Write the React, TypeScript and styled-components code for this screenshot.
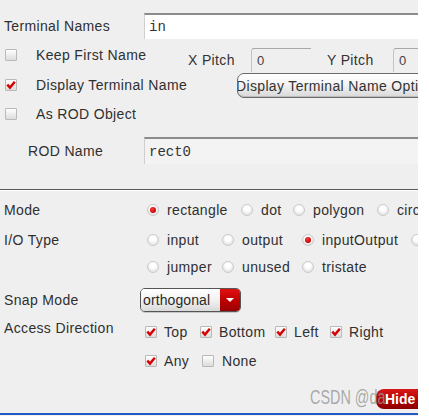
import React from 'react';
import styled, { createGlobalStyle } from 'styled-components';

const Global = createGlobalStyle`
  html, body { margin: 0; padding: 0; background: #ffffff; }
  body { font-family: "Liberation Sans", Arial, sans-serif; }
`;

const Panel = styled.div`
  position: relative;
  width: 418px;
  height: 416px;
  background: #efefef;
  overflow: hidden;
  color: #303030;
  font-size: 14px;
  letter-spacing: 0.35px;
  font-family: "Liberation Sans", Arial, sans-serif;
  display: flex;
  flex-direction: column;
`;

const Row = styled.div<{ $h: number; $mt?: number; $align?: string }>`
  display: flex;
  flex-shrink: 0;
  align-items: ${(p) => p.$align || 'center'};
  height: ${(p) => p.$h}px;
  margin-top: ${(p) => p.$mt || 0}px;
  white-space: nowrap;
`;

const Label = styled.div<{ $w: number; $pl?: number; $h?: number }>`
  flex: none;
  box-sizing: border-box;
  width: ${(p) => p.$w}px;
  padding-left: ${(p) => p.$pl ?? 4}px;
  height: ${(p) => p.$h ?? 24}px;
  display: flex;
  align-items: center;
`;

const TextField = styled.div<{ $bg?: string }>`
  flex: none;
  box-sizing: border-box;
  width: 300px;
  height: 100%;
  background: ${(p) => p.$bg || '#ffffff'};
  border-top: 2px solid #8c8c8c;
  border-left: 1px solid #cfcfcf;
  padding-left: 4px;
  display: flex;
  align-items: center;
  font-family: "Liberation Mono", "Courier New", monospace;
  font-size: 14px;
  letter-spacing: 0;
  color: #333;
`;

const CheckItem = styled.div<{ $w?: number; $mt?: number; $gap: number; $pl?: number }>`
  flex: none;
  box-sizing: border-box;
  ${(p) => (p.$w ? `width: ${p.$w}px;` : '')}
  margin-top: ${(p) => p.$mt || 0}px;
  padding-left: ${(p) => p.$pl || 0}px;
  height: 24px;
  display: flex;
  align-items: center;
  gap: ${(p) => p.$gap}px;
`;

const BoxWrap = styled.span`
  flex: none;
  width: 12px;
  height: 12px;
  box-sizing: border-box;
  border: 1px solid #b9b9b9;
  border-radius: 1px;
  background: linear-gradient(#ffffff, #dcdcdc);
  position: relative;
  display: block;
`;

const Check = styled.svg`
  position: absolute;
  left: 0;
  top: 0;
`;

const CheckBox = ({ on }: { on?: boolean }) => (
  <BoxWrap>
    {on && (
      <Check width="10" height="10" viewBox="0 0 10 10">
        <path d="M1.3 4.6 L4 7.6 L8.8 1.8" fill="none" stroke="#d60000" strokeWidth="2.4" strokeLinejoin="miter" />
      </Check>
    )}
  </BoxWrap>
);

const RadioCircle = styled.span<{ $on?: boolean }>`
  flex: none;
  width: 12px;
  height: 12px;
  border-radius: 50%;
  box-sizing: border-box;
  border: 1px solid #cacaca;
  background: radial-gradient(circle at 50% 35%, #ffffff 30%, #d6d6d6 100%);
  display: flex;
  align-items: center;
  justify-content: center;
  &::after {
    content: '';
    display: ${(p) => (p.$on ? 'block' : 'none')};
    width: 6px;
    height: 6px;
    border-radius: 50%;
    background: radial-gradient(circle at 40% 35%, #ff3a3a, #c80000 70%);
  }
`;

const Option = styled.div`
  display: flex;
  align-items: center;
  gap: 8px;
  height: 24px;
  white-space: nowrap;
`;

const Radio = ({ on, children }: { on?: boolean; children: React.ReactNode }) => (
  <Option>
    <RadioCircle $on={on} />
    <span>{children}</span>
  </Option>
);

const PitchLabel = styled.div<{ $w: number }>`
  flex: none;
  width: ${(p) => p.$w}px;
  height: 24px;
  display: flex;
  align-items: center;
  color: #333;
`;

const PitchField = styled.div`
  flex: none;
  box-sizing: border-box;
  width: 60px;
  height: 24px;
  border-top: 1px solid #a8a8a8;
  border-left: 1px solid #c4c4c4;
  border-top-left-radius: 3px;
  padding-left: 5px;
  display: flex;
  align-items: center;
  color: #444;
  font-size: 13px;
`;

const PitchGroup = styled.div`
  display: flex;
  margin-top: 9px;
`;

const Spacer = styled.div<{ $w: number }>`
  flex: none;
  width: ${(p) => p.$w}px;
`;

const OptButton = styled.div`
  flex: none;
  margin-top: 4px;
  width: 200px;
  height: 25px;
  box-sizing: border-box;
  border: 1px solid #6a6a6a;
  border-radius: 7px;
  background: linear-gradient(#ffffff, #f4f4f4 45%, #d8d8d8);
  box-shadow: inset 0 -1px 0 #bdbdbd;
  display: flex;
  align-items: center;
  justify-content: flex-start;
  text-indent: -2px;
  overflow: hidden;
  white-space: nowrap;
  color: #333;
`;

const Separator = styled.div`
  flex-shrink: 0;
  margin-top: 25px;
  height: 1px;
  background: #5a5a5a;
  border-bottom: 1px solid #ffffff;
`;

const OptGrid = styled.div<{ $cols: string; $mt?: number; $rg?: number }>`
  display: grid;
  grid-template-columns: ${(p) => p.$cols};
  grid-auto-rows: 24px;
  row-gap: ${(p) => p.$rg || 0}px;
  margin-top: ${(p) => p.$mt || 0}px;
`;

const Block = styled.div<{ $mt: number }>`
  display: flex;
  align-items: flex-start;
  flex-shrink: 0;
  margin-top: ${(p) => p.$mt}px;
  white-space: nowrap;
`;

const Dropdown = styled.div`
  flex: none;
  width: 101px;
  height: 24px;
  box-sizing: border-box;
  border: 1px solid #555;
  border-radius: 5px;
  overflow: hidden;
  display: flex;
  box-shadow: 0 1px 0 #c8c8c8;
`;

const DropText = styled.div`
  flex: 1;
  background: linear-gradient(#ffffff, #f2f2f2 50%, #d9d9d9);
  display: flex;
  align-items: center;
  padding-left: 2px;
  letter-spacing: 0.1px;
  color: #2a2a2a;
`;

const DropArrow = styled.div`
  flex: none;
  width: 20px;
  background: linear-gradient(#e01010, #b80000 60%, #9a0000);
  display: flex;
  align-items: center;
  justify-content: center;
  &::after {
    content: '';
    width: 0;
    height: 0;
    border-left: 4px solid transparent;
    border-right: 4px solid transparent;
    border-top: 4px solid #ffffff;
  }
`;

const CheckGrid = styled.div`
  display: grid;
  grid-template-columns: 55px 75px 55px auto;
  grid-auto-rows: 24px;
  row-gap: 5px;
  margin-top: 4px;
`;

const Footer = styled.div`
  margin-top: auto;
  display: flex;
  padding-left: 376px;
  height: 20px;
  flex-shrink: 0;
`;

const HideButton = styled.div`
  flex: none;
  width: 60px;
  height: 20px;
  border-radius: 8px;
  background: linear-gradient(#d81818, #b00000 60%, #8c0000);
  color: #ffffff;
  font-weight: bold;
  font-size: 14px;
  letter-spacing: 0;
  display: flex;
  align-items: center;
  padding-left: 9px;
  box-sizing: border-box;
`;

const BlueLine = styled.div`
  flex-shrink: 0;
  margin-top: 4px;
  margin-bottom: 1px;
  height: 2px;
  background: #2458c4;
`;

const Watermark = styled.div`
  position: absolute;
  left: 310px;
  top: 386px;
  font-family: "Liberation Sans", Arial, sans-serif;
  font-size: 20px;
  letter-spacing: 0;
  color: rgba(150, 150, 150, 0.8);
  transform: scaleX(0.72);
  transform-origin: left center;
  white-space: nowrap;
  pointer-events: none;
`;

export default function App() {
  return (
    <>
      <Global />
      <Panel>
        <Row $h={26} $mt={13}>
          <Label $w={144}>Terminal Names</Label>
          <TextField>in</TextField>
        </Row>

        <Row $h={30} $align="flex-start">
          <CheckItem $w={188} $mt={4} $gap={19} $pl={5}>
            <CheckBox />
            <span>Keep First Name</span>
          </CheckItem>
          <PitchGroup>
            <PitchLabel $w={63}>X Pitch</PitchLabel>
            <PitchField>0</PitchField>
            <Spacer $w={16} />
            <PitchLabel $w={66}>Y Pitch</PitchLabel>
            <PitchField>0</PitchField>
          </PitchGroup>
        </Row>

        <Row $h={31} $align="flex-start">
          <CheckItem $w={237} $mt={4} $gap={19} $pl={5}>
            <CheckBox on />
            <span>Display Terminal Name</span>
          </CheckItem>
          <OptButton>Display Terminal Name Options</OptButton>
        </Row>

        <Row $h={26} $align="flex-start">
          <CheckItem $mt={2} $gap={19} $pl={5}>
            <CheckBox />
            <span>As ROD Object</span>
          </CheckItem>
        </Row>

        <Row $h={27} $mt={11}>
          <Label $w={144} $pl={28}>ROD Name</Label>
          <TextField $bg="#f3f3f3">rect0</TextField>
        </Row>

        <Separator />

        <Block $mt={7}>
          <Label $w={147}>Mode</Label>
          <OptGrid $cols="94px 52px 84px auto">
            <Radio on>rectangle</Radio>
            <Radio>dot</Radio>
            <Radio>polygon</Radio>
            <Radio>circle</Radio>
          </OptGrid>
        </Block>

        <Block $mt={6}>
          <Label $w={147}>I/O Type</Label>
          <OptGrid $cols="75px 80px 109px auto" $rg={3}>
            <Radio>input</Radio>
            <Radio>output</Radio>
            <Radio on>inputOutput</Radio>
            <Radio>switch</Radio>
            <Radio>jumper</Radio>
            <Radio>unused</Radio>
            <Radio>tristate</Radio>
          </OptGrid>
        </Block>

        <Row $h={24} $mt={9}>
          <Label $w={140}>Snap Mode</Label>
          <Dropdown>
            <DropText>orthogonal</DropText>
            <DropArrow />
          </Dropdown>
        </Row>

        <Block $mt={4}>
          <Label $w={145}>Access Direction</Label>
          <CheckGrid>
            <CheckItem $gap={7}>
              <CheckBox on />
              <span>Top</span>
            </CheckItem>
            <CheckItem $gap={7}>
              <CheckBox on />
              <span>Bottom</span>
            </CheckItem>
            <CheckItem $gap={7}>
              <CheckBox on />
              <span>Left</span>
            </CheckItem>
            <CheckItem $gap={7}>
              <CheckBox on />
              <span>Right</span>
            </CheckItem>
            <CheckItem $gap={7}>
              <CheckBox on />
              <span>Any</span>
            </CheckItem>
            <CheckItem $gap={8} $pl={2}>
              <CheckBox />
              <span>None</span>
            </CheckItem>
          </CheckGrid>
        </Block>

        <Footer>
          <HideButton>Hide</HideButton>
        </Footer>
        <BlueLine />

        <Watermark>CSDN @da</Watermark>
      </Panel>
    </>
  );
}
